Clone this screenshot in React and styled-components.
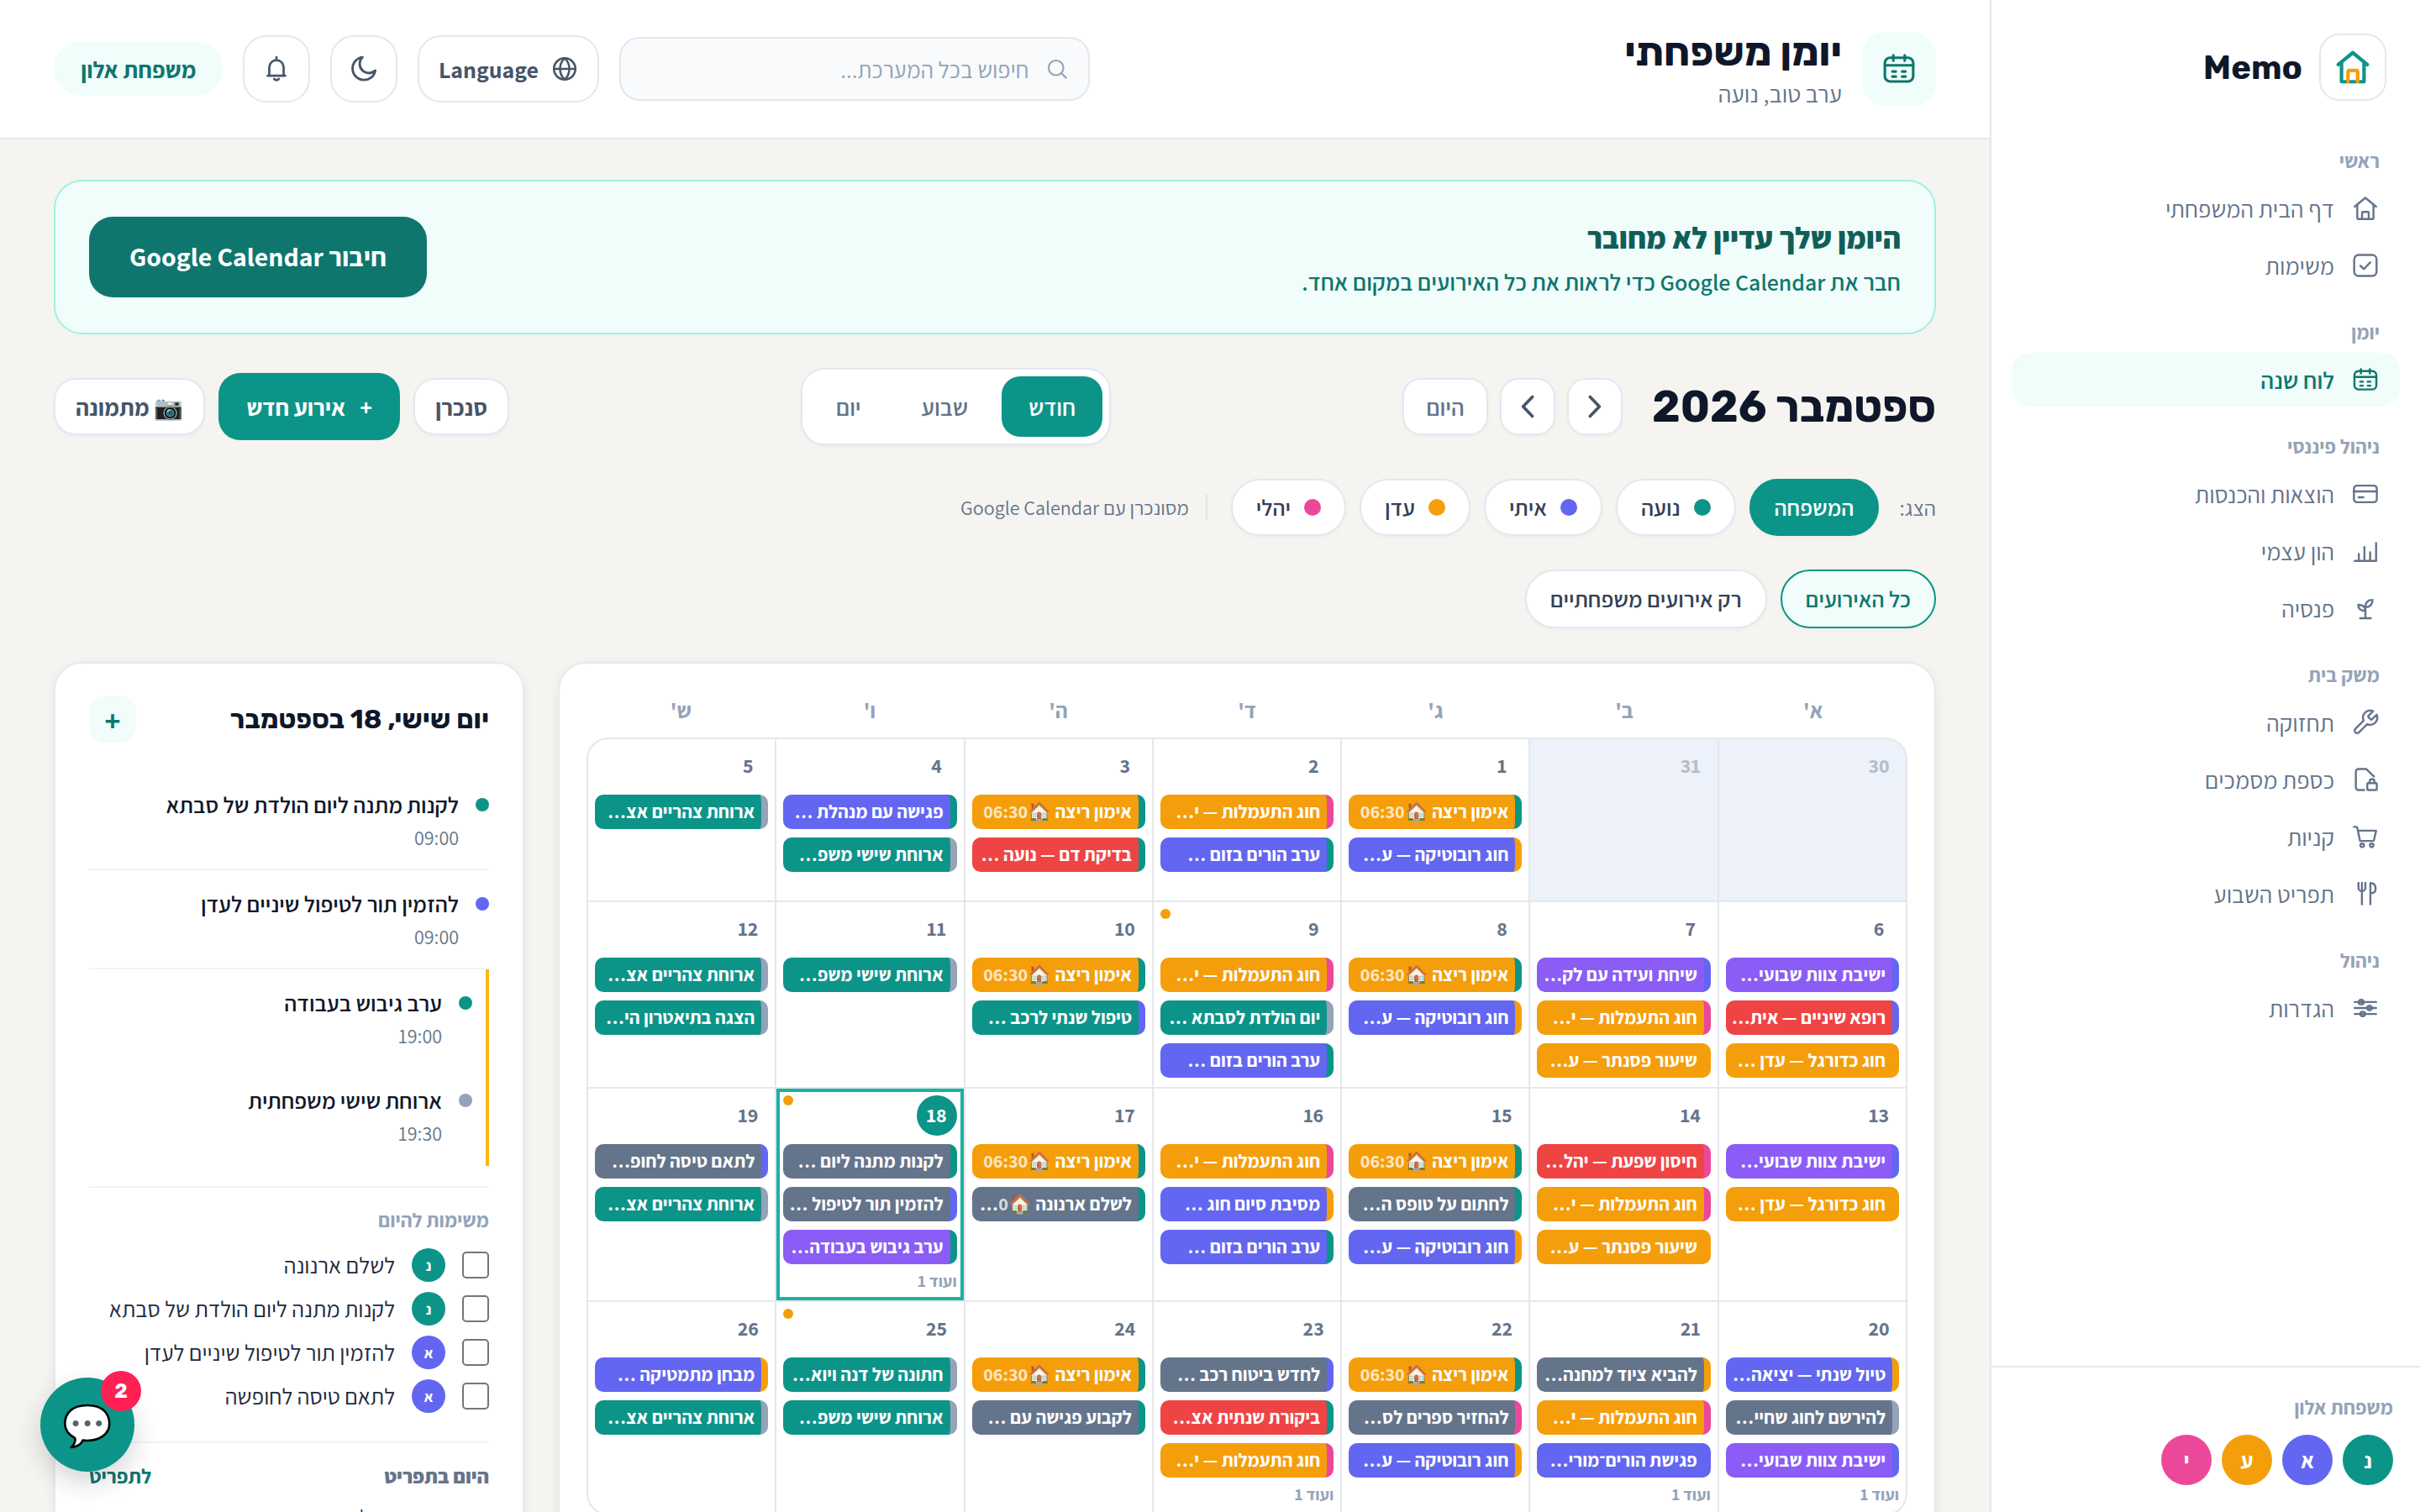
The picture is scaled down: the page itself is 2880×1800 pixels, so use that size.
import React from "react";
import styled, { createGlobalStyle, css } from "styled-components";

const TEAL = "#0d9488";
const INDIGO = "#6366f1";
const AMBER = "#f59e0b";
const PINK = "#ec4899";
const RED = "#ef4444";
const VIOLET = "#8b5cf6";
const SLATE = "#64748b";
const GRAY = "#94a3b8";

const icons = {
  home: ["M3 10.6 12 3.2l9 7.4", "M5.2 9v11a1 1 0 0 0 1 1h11.6a1 1 0 0 0 1-1V9", "M9.2 21v-5.2a.8.8 0 0 1 .8-.8h4a.8.8 0 0 1 .8.8V21"],
  check: ["M6.2 3.2h11.6a3.6 3.6 0 0 1 3.6 3.6v10.4a3.6 3.6 0 0 1-3.6 3.6H6.2a3.6 3.6 0 0 1-3.6-3.6V6.8a3.6 3.6 0 0 1 3.6-3.6z", "m7.8 12.2 3 2.8 5.3-5.6"],
  calendar: ["M6.2 4.8h11.6a3.4 3.4 0 0 1 3.4 3.4v8.6a3.4 3.4 0 0 1-3.4 3.4H6.2a3.4 3.4 0 0 1-3.4-3.4V8.2a3.4 3.4 0 0 1 3.4-3.4z", "M2.8 9.7h18.4", "M8.3 3.2v3.5", "M15.7 3.2v3.5", "M7.7 13.7h2.2", "M14 13.7h2.2", "M7.7 17h2.2", "M14 17h2.2"],
  card: ["M5 5h14a2.6 2.6 0 0 1 2.6 2.6v8.8A2.6 2.6 0 0 1 19 19H5a2.6 2.6 0 0 1-2.6-2.6V7.6A2.6 2.6 0 0 1 5 5z", "M2.4 9.9h19.2", "M6.3 14.8h4"],
  bars: ["M3 20.3h18", "M6.5 20v-5.6", "M11.2 20V8.6", "M16 20v-7", "M21 20V5.2"],
  sprout: ["M12 20.2V10.8", "M7.6 20.5h9", "M12 11.2c0-4 2.2-6.2 6-6.2 0 4-2 6.2-6 6.2z", "M12 14.4c0-3.4-2-5.2-6-5.2 0 3.4 2 5.2 6 5.2z"],
  wrench: ["M14.7 6.3a1 1 0 0 0 0 1.4l1.6 1.6a1 1 0 0 0 1.4 0l3.77-3.77a6 6 0 0 1-7.94 7.94l-6.91 6.91a2.12 2.12 0 0 1-3-3l6.91-6.91a6 6 0 0 1 7.94-7.94l-3.76 3.76z"],
  vault: ["M11 20.8H6.2A2.2 2.2 0 0 1 4 18.6V5.4a2.2 2.2 0 0 1 2.2-2.2h6.6l6.4 6.3", "M14.3 15h6.6a.7.7 0 0 1 .7.7v4.4a.7.7 0 0 1-.7.7h-6.6a.7.7 0 0 1-.7-.7v-4.4a.7.7 0 0 1 .7-.7z", "M15.6 15v-1.4a2 2 0 0 1 4 0V15"],
  cart: ["M2.4 3.8h1.8a1 1 0 0 1 1 .8l2.3 11h10.7a1 1 0 0 0 1-.8L21 7H5.8", "M7.8 19.3a1.5 1.5 0 1 0 3 0 1.5 1.5 0 1 0-3 0", "M15.8 19.3a1.5 1.5 0 1 0 3 0 1.5 1.5 0 1 0-3 0"],
  cutlery: ["M6.2 2.8v4a2.9 2.9 0 0 0 5.8 0v-4", "M9.1 2.8v18", "M16.2 20.8V3c3 0 4.4 2.2 4.4 5 0 2.4-1.2 3.6-4.4 3.6"],
  sliders: ["M3 7h18", "M3 12h18", "M3 17h18", "M6.4 7a2.1 1.9 0 1 0 4.2 0 2.1 1.9 0 1 0-4.2 0", "M13.4 12a2.1 1.9 0 1 0 4.2 0 2.1 1.9 0 1 0-4.2 0", "M7.7 17a2.1 1.9 0 1 0 4.2 0 2.1 1.9 0 1 0-4.2 0"],
  search: ["M4 11a7 7 0 1 0 14 0 7 7 0 1 0-14 0", "m20.5 20.5-4.3-4.3"],
  globe: ["M3 12a9 9 0 1 0 18 0 9 9 0 1 0-18 0", "M3 12h18", "M12 3c2.6 2.4 3.9 5.5 3.9 9s-1.3 6.6-3.9 9c-2.6-2.4-3.9-5.5-3.9-9S9.4 5.4 12 3z"],
  moon: ["M20.6 13.2A8.6 8.6 0 1 1 11 3.2a6.8 6.8 0 0 0 9.6 10z"],
  bell: ["M12 2.8v1.8", "M5 17.4h14", "M6.3 17.2v-6.4a5.7 5.7 0 0 1 11.4 0v6.4", "M10.2 20a2 1.7 0 0 0 3.6 0"],
  right: ["m8.2 4.3 7.4 7.7-7.4 7.7"],
  left: ["m15.8 4.3-7.4 7.7 7.4 7.7"],
};

const Icon = ({ name, size = 34, stroke = 1.7 }) => (
  <svg width={size} height={size} viewBox="0 0 24 24" fill="none" stroke="currentColor" strokeWidth={stroke} strokeLinecap="round" strokeLinejoin="round">
    {icons[name].map((d) => (
      <path key={d} d={d} />
    ))}
  </svg>
);

const navGroups = [
  ["ראשי", [["home", "דף הבית המשפחתי"], ["check", "משימות"]]],
  ["יומן", [["calendar", "לוח שנה", true]]],
  ["ניהול פיננסי", [["card", "הוצאות והכנסות"], ["bars", "הון עצמי"], ["sprout", "פנסיה"]]],
  ["משק בית", [["wrench", "תחזוקה"], ["vault", "כספת מסמכים"], ["cart", "קניות"], ["cutlery", "תפריט השבוע"]]],
  ["ניהול", [["sliders", "הגדרות"]]],
];

const family = [["נ", TEAL], ["א", INDIGO], ["ע", AMBER], ["י", PINK]];
const members = [["נועה", TEAL], ["איתי", INDIGO], ["עדן", AMBER], ["יהלי", PINK]];

const run = ["אימון ריצה 🏠", AMBER, TEAL, "06:30"];
const gym = ["חוג התעמלות — י…", AMBER, PINK];
const robotics = ["חוג רובוטיקה — ע…", INDIGO, AMBER];
const zoom = ["ערב הורים בזום …", INDIGO, TEAL];
const lunch = ["ארוחת צהריים אצ…", TEAL, GRAY];
const friday = ["ארוחת שישי משפ…", TEAL, GRAY];
const staff = ["ישיבת צוות שבועי…", VIOLET, INDIGO];
const soccer = ["חוג כדורגל — עדן …", AMBER, AMBER];
const piano = ["שיעור פסנתר — ע…", AMBER, AMBER];

const days = [
  { n: 30, out: true, events: [] },
  { n: 31, out: true, events: [] },
  { n: 1, events: [run, robotics] },
  { n: 2, events: [gym, zoom] },
  { n: 3, events: [run, ["בדיקת דם — נועה …", RED, TEAL]] },
  { n: 4, events: [["פגישה עם מנהלת …", INDIGO, TEAL], friday] },
  { n: 5, events: [lunch] },

  { n: 6, events: [staff, ["רופא שיניים — אית…", RED, INDIGO], soccer] },
  { n: 7, events: [["שיחת ועידה עם לק…", VIOLET, INDIGO], gym, piano] },
  { n: 8, events: [run, robotics] },
  { n: 9, dot: true, events: [gym, ["יום הולדת לסבתא …", TEAL, GRAY], zoom] },
  { n: 10, events: [run, ["טיפול שנתי לרכב …", TEAL, INDIGO]] },
  { n: 11, events: [friday] },
  { n: 12, events: [lunch, ["הצגה בתיאטרון הי…", TEAL, GRAY]] },

  { n: 13, events: [staff, soccer] },
  { n: 14, events: [["חיסון שפעת — יהל…", RED, PINK], gym, piano] },
  { n: 15, events: [run, ["לחתום על טופס ה…", SLATE, TEAL], robotics] },
  { n: 16, events: [gym, ["מסיבת סיום חוג …", INDIGO, AMBER], zoom] },
  { n: 17, events: [run, ["לשלם ארנונה 🏠", SLATE, TEAL, "0", "…"]] },
  { n: 18, today: true, dot: true, more: true, events: [["לקנות מתנה ליום …", SLATE, TEAL], ["להזמין תור לטיפול …", SLATE, INDIGO], ["ערב גיבוש בעבודה…", VIOLET, TEAL]] },
  { n: 19, events: [["לתאם טיסה לחופ…", SLATE, INDIGO], lunch] },

  { n: 20, more: true, events: [["טיול שנתי — יציאה…", INDIGO, AMBER], ["להירשם לחוג שחיי…", SLATE, GRAY], staff] },
  { n: 21, more: true, events: [["להביא ציוד למחנה…", SLATE, AMBER], gym, ["פגישת הורים־מורי…", INDIGO, INDIGO]] },
  { n: 22, events: [run, ["להחזיר ספרים לס…", SLATE, PINK], robotics] },
  { n: 23, more: true, events: [["לחדש ביטוח רכב …", SLATE, INDIGO], ["ביקורת שנתית אצ…", RED, TEAL], gym] },
  { n: 24, events: [run, ["לקבוע פגישה עם …", SLATE, TEAL]] },
  { n: 25, dot: true, events: [["חתונה של דנה ויוא…", TEAL, GRAY], friday] },
  { n: 26, events: [["מבחן מתמטיקה …", INDIGO, AMBER], lunch] },
];

const todos = [
  ["נ", TEAL, "לשלם ארנונה"],
  ["נ", TEAL, "לקנות מתנה ליום הולדת של סבתא"],
  ["א", INDIGO, "להזמין תור לטיפול שיניים לעדן"],
  ["א", INDIGO, "לתאם טיסה לחופשה"],
];

const App = () => (
  <>
    <GlobalStyle />
    <Shell>
      <Sidebar>
        <Brand>
          <LogoBox>
            <svg width="46" height="46" viewBox="0 0 24 24" fill="none" strokeWidth="2.2" strokeLinecap="round" strokeLinejoin="round">
              <path stroke={TEAL} d="M3 10.4 12 3l9 7.4" />
              <path stroke={TEAL} d="M5 9.5V21h14V9.5" />
              <path stroke={AMBER} d="M9 21v-6a1 1 0 0 1 1-1h4a1 1 0 0 1 1 1v6" />
            </svg>
          </LogoBox>
          <BrandName>Memo</BrandName>
        </Brand>
        <Nav>
          {navGroups.map(([label, items]) => (
            <div key={label}>
              <NavLabel>{label}</NavLabel>
              {items.map(([icon, text, active]) => (
                <NavItem key={text} $active={active}>
                  <Icon name={icon} />
                  {text}
                </NavItem>
              ))}
            </div>
          ))}
        </Nav>
        <SidebarFooter>
          <FamilyName>משפחת אלון</FamilyName>
          <Avatars>
            {family.map(([letter, color]) => (
              <Avatar key={letter} $color={color} $size={60} $font={26}>
                {letter}
              </Avatar>
            ))}
          </Avatars>
        </SidebarFooter>
      </Sidebar>

      <Main>
        <Header>
          <TitleIcon>
            <Icon name="calendar" size={44} />
          </TitleIcon>
          <TitleBlock>
            <PageTitle>יומן משפחתי</PageTitle>
            <Greeting>ערב טוב, נועה</Greeting>
          </TitleBlock>
          <Controls>
            <Search>
              <Icon name="search" size={30} />
              חיפוש בכל המערכת...
            </Search>
            <ControlButton $wide>
              <Icon name="globe" size={34} stroke={1.8} />
              Language
            </ControlButton>
            <ControlButton>
              <Icon name="moon" size={38} stroke={1.8} />
            </ControlButton>
            <ControlButton>
              <Icon name="bell" size={36} stroke={1.8} />
            </ControlButton>
            <FamilyPill>משפחת אלון</FamilyPill>
          </Controls>
        </Header>

        <Content>
          <Banner>
            <div>
              <BannerTitle>היומן שלך עדיין לא מחובר</BannerTitle>
              <BannerText>חבר את Google Calendar כדי לראות את כל האירועים במקום אחד.</BannerText>
            </div>
            <BannerButton>חיבור Google Calendar</BannerButton>
          </Banner>

          <Toolbar>
            <MonthNav>
              <Month>ספטמבר 2026</Month>
              <NavButton>
                <Icon name="right" size={36} stroke={2.4} />
              </NavButton>
              <NavButton>
                <Icon name="left" size={36} stroke={2.4} />
              </NavButton>
              <TodayButton>היום</TodayButton>
            </MonthNav>
            <Segmented>
              <Segment $active>חודש</Segment>
              <Segment>שבוע</Segment>
              <Segment>יום</Segment>
            </Segmented>
            <Actions>
              <ActionButton>סנכרן</ActionButton>
              <PrimaryButton>
                <span>+</span>
                אירוע חדש
              </PrimaryButton>
              <ActionButton>📷 מתמונה</ActionButton>
            </Actions>
          </Toolbar>

          <ChipRow>
            <ShowLabel>הצג:</ShowLabel>
            <Chip $solid>המשפחה</Chip>
            {members.map(([name, color]) => (
              <Chip key={name}>
                <Dot $color={color} $size={20} />
                {name}
              </Chip>
            ))}
            <SyncNote>מסונכרן עם Google Calendar</SyncNote>
          </ChipRow>

          <FilterRow>
            <Filter $active>כל האירועים</Filter>
            <Filter>רק אירועים משפחתיים</Filter>
          </FilterRow>

          <Columns>
            <CalendarCard>
              <Weekdays>
                {["א'", "ב'", "ג'", "ד'", "ה'", "ו'", "ש'"].map((d) => (
                  <span key={d}>{d}</span>
                ))}
              </Weekdays>
              <MonthGrid>
                {days.map((day) => (
                  <Cell key={day.n} $out={day.out} $today={day.today}>
                    {day.dot && <CellDot />}
                    <DayNumber $out={day.out} $today={day.today}>
                      {day.n}
                    </DayNumber>
                    {day.events.map(([text, color, side, time, rest]) => (
                      <Event key={text} $color={color} $side={side}>
                        {text}
                        {time && <Time>{time}</Time>}
                        {rest}
                      </Event>
                    ))}
                    {day.more && <More>ועוד 1</More>}
                  </Cell>
                ))}
              </MonthGrid>
            </CalendarCard>

            <DayPanel>
              <PanelHead>
                <PanelTitle>יום שישי, 18 בספטמבר</PanelTitle>
                <AddButton>+</AddButton>
              </PanelHead>
              <AgendaItem $color={TEAL} title="לקנות מתנה ליום הולדת של סבתא" time="09:00" />
              <AgendaItem $color={INDIGO} title="להזמין תור לטיפול שיניים לעדן" time="09:00" />
              <Clash>
                <AgendaItem $color={TEAL} title="ערב גיבוש בעבודה" time="19:00" />
                <AgendaItem $color={GRAY} title="ארוחת שישי משפחתית" time="19:30" />
              </Clash>
              <Todos>
                <TodosTitle>משימות להיום</TodosTitle>
                {todos.map(([letter, color, text]) => (
                  <Todo key={text}>
                    <Checkbox />
                    <Avatar $color={color} $size={40} $font={18}>
                      {letter}
                    </Avatar>
                    {text}
                  </Todo>
                ))}
              </Todos>
              <MenuHead>
                היום בתפריט
                <MenuLink>לתפריט</MenuLink>
              </MenuHead>
              <MenuLine>ארוחת ערב שניצל</MenuLine>
            </DayPanel>
          </Columns>
        </Content>
      </Main>

      <ChatButton>
        💬
        <ChatBadge>2</ChatBadge>
      </ChatButton>
    </Shell>
  </>
);

const AgendaItem = ({ $color, title, time }) => (
  <AgendaRow>
    <Dot $color={$color} $size={16} />
    <div>
      <AgendaTitle>{title}</AgendaTitle>
      <AgendaTime>{time}</AgendaTime>
    </div>
  </AgendaRow>
);

const GlobalStyle = createGlobalStyle`
  * {
    box-sizing: border-box;
  }

  body {
    margin: 0;
    background: #f5f4f0;
    font-family: Assistant, "Open Sans", sans-serif;
    color: #0f172a;
    overflow: hidden;
  }

  svg {
    flex: none;
    display: block;
  }
`;

const heading = css`
  font-family: Rubik, "Open Sans", sans-serif;
  font-weight: 700;
`;

const surface = css`
  background: #fff;
  border: 2px solid #e6e6f2;
  box-shadow: 0 2px 4px rgba(15, 23, 42, 0.03);
`;

const Shell = styled.div`
  direction: rtl;
  display: flex;
  width: 2880px;
  height: 1800px;
  overflow: hidden;
`;

/* Sidebar */
const Sidebar = styled.aside`
  flex: none;
  display: flex;
  flex-direction: column;
  width: 512px;
  background: #fff;
  border-left: 2px solid #e5e7eb;
`;

const Brand = styled.div`
  display: flex;
  align-items: center;
  gap: 20px;
  padding: 40px 40px 0;
`;

const LogoBox = styled.div`
  display: flex;
  align-items: center;
  justify-content: center;
  width: 80px;
  height: 80px;
  border: 2px solid #e5e7eb;
  border-radius: 24px;
`;

const BrandName = styled.div`
  ${heading}
  font-size: 40px;
`;

const Nav = styled.nav`
  flex: 1;
  padding: 28px 24px 0;
`;

const NavLabel = styled.div`
  padding: 28px 24px 10px;
  line-height: 30px;
  font-size: 24px;
  font-weight: 700;
  color: ${GRAY};
`;

const NavItem = styled.div`
  display: flex;
  align-items: center;
  gap: 20px;
  height: 64px;
  margin-bottom: 4px;
  padding: 0 24px;
  border-radius: 22px;
  font-size: 28.4px;
  font-weight: ${(p) => (p.$active ? 600 : 400)};
  color: ${(p) => (p.$active ? "#0f766e" : SLATE)};
  background: ${(p) => (p.$active ? "#f0fdfa" : "transparent")};
`;

const SidebarFooter = styled.div`
  height: 174px;
  padding: 30px 32px 0;
  border-top: 2px solid #e5e7eb;
`;

const FamilyName = styled.div`
  line-height: 34px;
  margin-bottom: 16px;
  font-size: 24px;
  font-weight: 700;
  color: ${GRAY};
`;

const Avatars = styled.div`
  display: flex;
  gap: 12px;
`;

const Avatar = styled.div`
  flex: none;
  display: flex;
  align-items: center;
  justify-content: center;
  width: ${(p) => p.$size}px;
  height: ${(p) => p.$size}px;
  border-radius: 50%;
  background: ${(p) => p.$color};
  color: #fff;
  font-size: ${(p) => p.$font}px;
  font-weight: 700;
`;

/* Header */
const Main = styled.div`
  flex: 1;
  min-width: 0;
  display: flex;
  flex-direction: column;
`;

const Header = styled.header`
  flex: none;
  display: flex;
  align-items: center;
  height: 166px;
  padding: 0 64px;
  background: #fff;
  border-bottom: 2px solid #e5e7f3;
`;

const TitleIcon = styled.div`
  display: flex;
  align-items: center;
  justify-content: center;
  width: 88px;
  height: 88px;
  border-radius: 28px;
  background: #f0fdfa;
  color: #0f766e;
`;

const TitleBlock = styled.div`
  margin-right: 24px;
`;

const PageTitle = styled.div`
  ${heading}
  font-size: 48px;
  line-height: 57px;
`;

const Greeting = styled.div`
  margin-top: 3px;
  font-size: 28.8px;
  line-height: 38px;
  color: ${SLATE};
`;

const Controls = styled.div`
  display: flex;
  align-items: center;
  gap: 24px;
  margin-right: auto;
`;

const Search = styled.div`
  display: flex;
  align-items: center;
  gap: 19px;
  width: 560px;
  height: 76px;
  padding: 0 22px;
  border: 2px solid #e2e8f0;
  border-radius: 24px;
  background: #f8fafc;
  font-size: 28px;
  color: ${GRAY};
`;

const ControlButton = styled.div`
  display: flex;
  align-items: center;
  justify-content: center;
  gap: 14px;
  width: ${(p) => (p.$wide ? 216 : 80)}px;
  height: 80px;
  border: 2px solid #e5e7eb;
  border-radius: 28px;
  font-size: 28px;
  font-weight: 700;
  color: #475569;
`;

const FamilyPill = styled.div`
  display: flex;
  align-items: center;
  height: 64px;
  padding: 0 32px;
  border-radius: 32px;
  background: #f0fdfa;
  color: #0f766e;
  font-size: 28px;
  font-weight: 700;
`;

/* Content */
const Content = styled.main`
  flex: 1;
  min-height: 0;
  display: flex;
  flex-direction: column;
  padding: 48px 64px 0;
  overflow: hidden;
`;

const Banner = styled.section`
  flex: none;
  display: flex;
  align-items: center;
  justify-content: space-between;
  height: 184px;
  padding: 0 40px;
  border: 2px solid #a0f0e2;
  border-radius: 34px;
  background: #f0fdfa;
`;

const BannerTitle = styled.div`
  padding-top: 3px;
  font-size: 36px;
  font-weight: 800;
  line-height: 50px;
  color: #115e59;
`;

const BannerText = styled.div`
  margin-top: 7px;
  font-size: 28px;
  font-weight: 600;
  line-height: 42px;
  color: #0f766e;
`;

const BannerButton = styled.div`
  display: flex;
  align-items: center;
  justify-content: center;
  width: 402px;
  height: 96px;
  padding-bottom: 3px;
  border-radius: 28px;
  background: #0f766e;
  color: #fff;
  font-size: 32px;
  font-weight: 700;
`;

const Toolbar = styled.div`
  flex: none;
  display: flex;
  align-items: center;
  justify-content: space-between;
  height: 92px;
  margin-top: 40px;
`;

const MonthNav = styled.div`
  display: flex;
  align-items: center;
  gap: 14px;
`;

const Month = styled.div`
  ${heading}
  margin-left: 21px;
  font-size: 52px;
`;

const NavButton = styled.div`
  ${surface}
  display: flex;
  align-items: center;
  justify-content: center;
  width: 66px;
  height: 68px;
  border-radius: 22px;
  color: #475569;
`;

const TodayButton = styled(NavButton)`
  width: 102px;
  font-size: 28px;
  font-weight: 600;
  color: ${SLATE};
`;

const Segmented = styled.div`
  ${surface}
  display: flex;
  gap: 8px;
  padding: 8px;
  border-radius: 28px;
`;

const Segment = styled.div`
  display: flex;
  align-items: center;
  height: 72px;
  padding: 0 32px;
  border-radius: 22px;
  font-size: 28px;
  font-weight: 600;
  background: ${(p) => (p.$active ? TEAL : "transparent")};
  color: ${(p) => (p.$active ? "#fff" : SLATE)};
`;

const Actions = styled.div`
  display: flex;
  align-items: center;
  gap: 16px;
`;

const ActionButton = styled.div`
  ${surface}
  display: flex;
  align-items: center;
  height: 68px;
  padding: 0 24px;
  border-radius: 26px;
  font-size: 28px;
  font-weight: 700;
  color: #475569;
`;

const PrimaryButton = styled.div`
  display: flex;
  align-items: center;
  gap: 17px;
  height: 80px;
  padding: 0 33px;
  border-radius: 26px;
  background: ${TEAL};
  color: #fff;
  font-size: 28px;
  font-weight: 700;
`;

const ChipRow = styled.div`
  flex: none;
  display: flex;
  align-items: center;
  gap: 16px;
  margin-top: 40px;
`;

const ShowLabel = styled.div`
  margin-left: 8px;
  font-size: 26px;
  color: ${SLATE};
`;

const Chip = styled.div`
  ${surface}
  display: flex;
  align-items: center;
  gap: 16px;
  height: 68px;
  padding: 0 28px;
  border-radius: 34px;
  font-size: 27px;
  font-weight: 600;
  color: #334155;
  ${(p) =>
    p.$solid &&
    css`
      background: ${TEAL};
      border-color: ${TEAL};
      color: #fff;
    `}
`;

const Dot = styled.span`
  flex: none;
  width: ${(p) => p.$size}px;
  height: ${(p) => p.$size}px;
  border-radius: 50%;
  background: ${(p) => p.$color};
`;

const SyncNote = styled.div`
  margin-right: 12px;
  padding-right: 20px;
  border-right: 2px solid #e2e5ee;
  font-size: 24px;
  line-height: 32px;
  color: ${SLATE};
`;

const FilterRow = styled.div`
  flex: none;
  display: flex;
  gap: 16px;
  margin-top: 40px;
`;

const Filter = styled(Chip)`
  height: 70px;
  border-radius: 35px;
  ${(p) =>
    p.$active &&
    css`
      background: #f0fdfa;
      border-color: ${TEAL};
      color: #0f766e;
    `}
`;

const Columns = styled.div`
  flex: none;
  display: flex;
  align-items: flex-start;
  gap: 40px;
  margin-top: 40px;
`;

/* Month calendar */
const Card = styled.section`
  flex: none;
  height: 1300px;
  background: #fff;
  border: 2px solid #e8e9ee;
  border-radius: 34px;
  box-shadow: 0 4px 14px rgba(15, 23, 42, 0.06);
`;

const CalendarCard = styled(Card)`
  width: 1640px;
  padding: 32px;
`;

const Weekdays = styled.div`
  display: grid;
  grid-template-columns: repeat(7, 1fr);
  height: 56px;
  line-height: 46px;
  text-align: center;
  font-size: 26px;
  font-weight: 700;
  color: ${GRAY};
`;

/* the 2px gaps show the grid background as cell lines */
const MonthGrid = styled.div`
  display: grid;
  grid-template-columns: repeat(7, 1fr);
  grid-template-rows: 192px 220px 252px 252px;
  gap: 2px;
  border: 2px solid #e5e7eb;
  border-radius: 26px;
  background: #e5e7eb;
  overflow: hidden;
`;

const Cell = styled.div`
  position: relative;
  display: flex;
  flex-direction: column;
  gap: 10px;
  min-width: 0;
  padding: 8px;
  background: ${(p) => (p.$out ? "#edf1f9" : "#fff")};
  box-shadow: ${(p) => (p.$today ? "inset 0 0 0 4px #1ab3a0" : "none")};
`;

const CellDot = styled.span`
  position: absolute;
  top: 8px;
  left: 8px;
  width: 12px;
  height: 12px;
  border-radius: 50%;
  background: ${AMBER};
`;

const DayNumber = styled.div`
  flex: none;
  display: flex;
  align-items: center;
  justify-content: center;
  width: 48px;
  height: 48px;
  padding-bottom: 3px;
  border-radius: 50%;
  font-size: 24px;
  font-weight: 700;
  color: ${(p) => (p.$today ? "#fff" : p.$out ? "#b4bcca" : SLATE)};
  background: ${(p) => (p.$today ? TEAL : "transparent")};
`;

const Event = styled.div`
  flex: none;
  height: 41px;
  padding: 0 8px;
  border-right: 8px solid ${(p) => p.$side};
  border-radius: 10px;
  background: ${(p) => p.$color};
  color: #fff;
  font-size: 22.2px;
  font-weight: 700;
  line-height: 40px;
  white-space: nowrap;
  overflow: hidden;
`;

const Time = styled.span`
  opacity: 0.75;
`;

const More = styled.div`
  line-height: 21px;
  font-size: 20px;
  font-weight: 700;
  color: ${GRAY};
`;

/* Day panel */
const DayPanel = styled(Card)`
  width: 560px;
  padding: 38px 40px;
`;

const PanelHead = styled.div`
  display: flex;
  align-items: center;
  justify-content: space-between;
  height: 56px;
  margin-bottom: 34px;
`;

const PanelTitle = styled.div`
  ${heading}
  font-size: 32.2px;
`;

const AddButton = styled.div`
  display: flex;
  align-items: center;
  justify-content: center;
  width: 56px;
  height: 56px;
  border-radius: 20px;
  background: #f0fdfa;
  color: #0f766e;
  font-size: 36px;
  font-weight: 700;
`;

const AgendaRow = styled.div`
  display: flex;
  gap: 20px;
  height: 118px;
  padding-top: 20px;
  border-bottom: 2px solid #f1f3f6;

  & > span {
    margin-top: 12px;
  }
`;

const AgendaTitle = styled.div`
  font-size: 27px;
  font-weight: 600;
  line-height: 40px;
`;

const AgendaTime = styled.div`
  line-height: 38px;
  font-size: 24px;
  color: ${SLATE};
`;

const Clash = styled.div`
  padding-right: 16px;
  border-right: 4px solid #fbb613;

  & > div {
    height: 116px;
    border-bottom: 0;
  }

  & > div:last-child {
    height: 118px;
  }
`;

const Todos = styled.div`
  height: 304px;
  margin-top: 24px;
  padding-top: 18px;
  border-top: 2px solid #f1f3f6;
`;

const TodosTitle = styled.div`
  line-height: 40px;
  margin-bottom: 8px;
  font-size: 24px;
  font-weight: 700;
  color: ${GRAY};
`;

const Todo = styled.div`
  display: flex;
  align-items: center;
  gap: 20px;
  height: 52px;
  font-size: 27px;
  color: #1e293b;
`;

const Checkbox = styled.span`
  width: 32px;
  height: 32px;
  border: 2px solid #767676;
  border-radius: 5px;
`;

const MenuHead = styled.div`
  display: flex;
  justify-content: space-between;
  padding-top: 19px;
  border-top: 2px solid #f1f3f6;
  line-height: 40px;
  font-size: 24.5px;
  font-weight: 800;
  color: ${SLATE};
`;

const MenuLink = styled.span`
  font-weight: 700;
  color: #0f766e;
`;

const MenuLine = styled.div`
  margin-top: 9px;
  line-height: 40px;
  font-size: 23.5px;
  color: #1e293b;
`;

const ChatButton = styled.div`
  position: absolute;
  left: 48px;
  top: 1640px;
  display: flex;
  align-items: center;
  justify-content: center;
  width: 112px;
  height: 112px;
  border-radius: 50%;
  background: ${TEAL};
  box-shadow: 0 12px 30px rgba(15, 23, 42, 0.18);
  font-size: 48px;
`;

const ChatBadge = styled.span`
  ${heading}
  position: absolute;
  top: -8px;
  right: -8px;
  width: 48px;
  height: 48px;
  border-radius: 50%;
  background: #ff2056;
  color: #fff;
  font-size: 24px;
  line-height: 48px;
  text-align: center;
`;

export default App;
